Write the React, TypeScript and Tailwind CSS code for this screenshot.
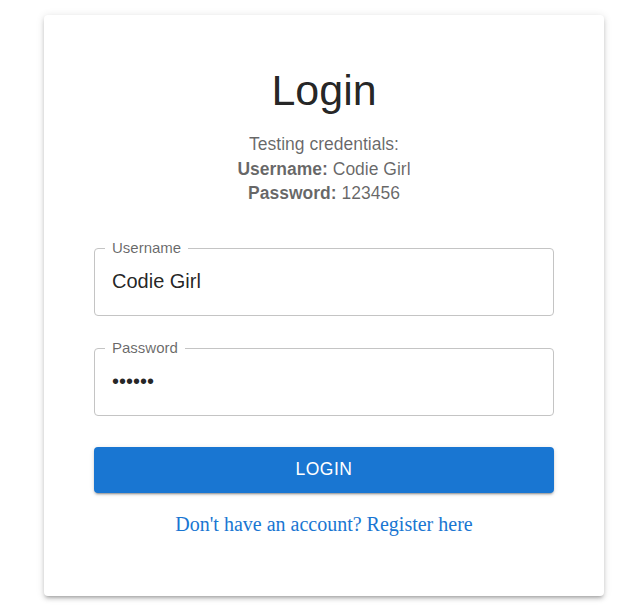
import { useState } from 'react';

function OutlinedField({ label, value, type = 'text' }: { label: string; value: string; type?: string }) {
    const [val, setVal] = useState(value);
    return (
        <div className="relative h-[68px] rounded-[4px] border border-[#c4c4c4]">
            <span className="absolute -top-[11px] left-[10px] bg-white px-[7px] text-[15px] leading-[20px] text-[rgba(0,0,0,0.6)]">
                {label}
            </span>
            <input
                type={type}
                value={val}
                onChange={(e) => setVal(e.target.value)}
                className="h-full w-full bg-transparent px-[17px] text-[20px] text-[rgba(0,0,0,0.87)] outline-none"
            />
        </div>
    );
}

export default function App() {
    return (
        <div className="min-h-[615px] bg-white pt-[15px] font-['Liberation_Sans',Arial,sans-serif]">
            <div className="ml-[44px] w-[560px] rounded-[4px] bg-white px-[50px] pt-[50px] pb-[61px] shadow-[0px_3px_3px_-2px_rgba(0,0,0,0.2),0px_3px_4px_0px_rgba(0,0,0,0.14),0px_1px_8px_0px_rgba(0,0,0,0.12)]">
                <h1 className="text-center text-[43px] leading-[50px] text-[rgba(0,0,0,0.87)]">Login</h1>

                <div className="mt-[17px] text-center text-[17.5px] leading-[24.5px] text-[rgba(0,0,0,0.6)]">
                    <p>Testing credentials:</p>
                    <p><span className="font-bold">Username:</span> Codie Girl</p>
                    <p><span className="font-bold">Password:</span> 123456</p>
                </div>

                <div className="mt-[42px] flex flex-col gap-[32px]">
                    <OutlinedField label="Username" value="Codie Girl" />
                    <OutlinedField label="Password" value="123456" type="password" />
                </div>

                <button className="mt-[31px] h-[46px] w-full rounded-[4px] bg-[#1976d2] text-[17.5px] tracking-[0.5px] text-white shadow-[0px_3px_1px_-2px_rgba(0,0,0,0.2),0px_2px_2px_0px_rgba(0,0,0,0.14),0px_1px_5px_0px_rgba(0,0,0,0.12)]">
                    LOGIN
                </button>

                <p className="mt-[20px] text-center font-['Liberation_Serif','Times_New_Roman',serif] text-[20px] leading-[22px]">
                    <a href="#" className="text-[#1976d2]">Don't have an account? Register here</a>
                </p>
            </div>
        </div>
    );
}
